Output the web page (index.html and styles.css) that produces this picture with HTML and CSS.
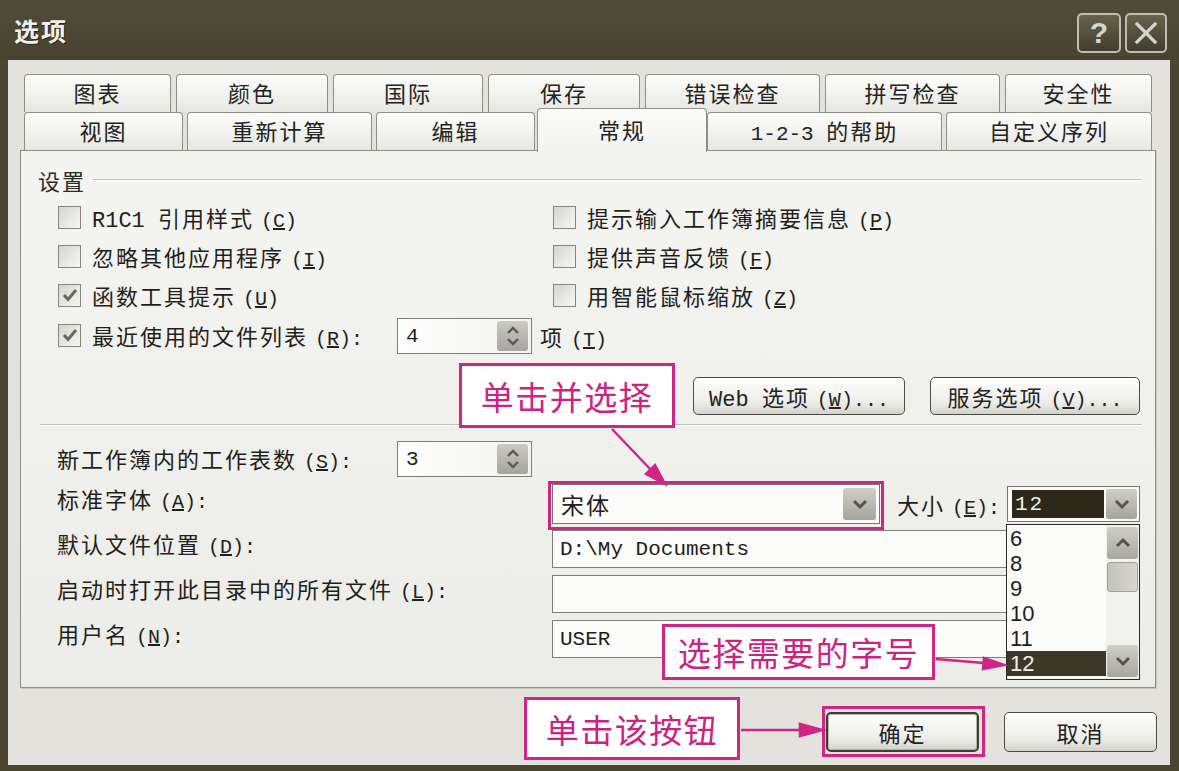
FILE: index.html
```html
<!DOCTYPE html>
<html lang="zh-CN">
<head>
<meta charset="utf-8">
<title>选项</title>
<link rel="stylesheet" href="styles.css">
</head>
<body>
<div class="dialog">
  <header class="titlebar">
    <h1 class="title">选项</h1>
    <div class="caption-buttons">
      <div class="cap-btn help">?</div>
      <div class="cap-btn close">
        <svg width="26" height="26" viewBox="0 0 26 26"><path d="M4 4 L22 22 M22 4 L4 22" stroke="#d6d5cc" stroke-width="3.2" stroke-linecap="square"/></svg>
      </div>
    </div>
  </header>

  <div class="client">
    <div class="tabs">
      <div class="tab-row back">
        <div class="tab w147">图表</div>
        <div class="tab w152">颜色</div>
        <div class="tab w150">国际</div>
        <div class="tab w152">保存</div>
        <div class="tab w175">错误检查</div>
        <div class="tab w175">拼写检查</div>
        <div class="tab w147">安全性</div>
      </div>
      <div class="tab-row front">
        <div class="tab w159">视图</div>
        <div class="tab w185">重新计算</div>
        <div class="tab w159">编辑</div>
        <div class="tab active w170">常规</div>
        <div class="tab w235"><span><span class="mono">1-2-3 </span>的帮助</span></div>
        <div class="tab w206">自定义序列</div>
      </div>
    </div>

    <div class="panel">
      <div class="group-head"><span>设置</span><span class="rule"></span></div>

      <div class="checks">
        <div class="check"><span class="box"></span><span><span class="mono">R1C1 </span>引用样式 <span class="acc">(<u>C</u>)</span></span></div>
        <div class="check"><span class="box"></span><span>提示输入工作簿摘要信息 <span class="acc">(<u>P</u>)</span></span></div>
        <div class="check"><span class="box"></span><span>忽略其他应用程序 <span class="acc">(<u>I</u>)</span></span></div>
        <div class="check"><span class="box"></span><span>提供声音反馈 <span class="acc">(<u>F</u>)</span></span></div>
        <div class="check"><span class="box checked"><svg width="20" height="20" viewBox="0 0 20 20"><path d="M4 10 L8 14.5 L16 5" fill="none" stroke="#6b6a62" stroke-width="3"/></svg></span><span>函数工具提示 <span class="acc">(<u>U</u>)</span></span></div>
        <div class="check"><span class="box"></span><span>用智能鼠标缩放 <span class="acc">(<u>Z</u>)</span></span></div>
      </div>

      <div class="recent">
        <div class="check recent-label"><span class="box checked"><svg width="20" height="20" viewBox="0 0 20 20"><path d="M4 10 L8 14.5 L16 5" fill="none" stroke="#6b6a62" stroke-width="3"/></svg></span><span>最近使用的文件列表 <span class="acc">(<u>R</u>):</span></span></div>
        <div class="spin">
          <span class="spin-val">4</span>
          <span class="spin-btn">
            <svg width="16" height="24" viewBox="0 0 16 24"><path d="M3 9 L8 4 L13 9 M3 15 L8 20 L13 15" fill="none" stroke="#5b5a52" stroke-width="2.4"/></svg>
          </span>
        </div>
        <span class="items-label">项 <span class="acc">(<u>T</u>)</span></span>
      </div>

      <div class="option-buttons">
        <div class="btn wide"><span><span class="mono">Web </span>选项 <span class="acc">(<u>W</u>)...</span></span></div>
        <div class="btn wide2"><span>服务选项 <span class="acc">(<u>V</u>)...</span></span></div>
      </div>

      <div class="divider"></div>

      <div class="form">
        <div class="label first">新工作簿内的工作表数 <span class="acc">(<u>S</u>):</span></div>
        <div class="spin">
          <span class="spin-val">3</span>
          <span class="spin-btn">
            <svg width="16" height="24" viewBox="0 0 16 24"><path d="M3 9 L8 4 L13 9 M3 15 L8 20 L13 15" fill="none" stroke="#5b5a52" stroke-width="2.4"/></svg>
          </span>
        </div>
        <div class="fill"></div>

        <div class="label span2">标准字体 <span class="acc">(<u>A</u>):</span></div>
        <div class="font-row">
          <div class="combo">
            <span class="combo-text">宋体</span>
            <span class="drop-btn"><svg width="18" height="14" viewBox="0 0 18 14"><path d="M3 4 L9 10 L15 4" fill="none" stroke="#55544c" stroke-width="3"/></svg></span>
          </div>
          <span class="size-label">大小 <span class="acc">(<u>E</u>):</span></span>
          <div class="size-combo">
            <span class="size-sel">12</span>
            <span class="drop-btn"><svg width="18" height="14" viewBox="0 0 18 14"><path d="M3 4 L9 10 L15 4" fill="none" stroke="#55544c" stroke-width="3"/></svg></span>
          </div>
        </div>

        <div class="label span2">默认文件位置 <span class="acc">(<u>D</u>):</span></div>
        <div class="field">D:\My Documents</div>

        <div class="label span2">启动时打开此目录中的所有文件 <span class="acc">(<u>L</u>):</span></div>
        <div class="field"></div>

        <div class="label span2">用户名 <span class="acc">(<u>N</u>):</span></div>
        <div class="field">USER</div>
      </div>
    </div>

    <div class="footer">
      <div class="btn action default">确定</div>
      <div class="btn action">取消</div>
    </div>
  </div>

  <div class="dropdown">
    <div class="dd-items">
      <div class="dd-item">6</div>
      <div class="dd-item">8</div>
      <div class="dd-item">9</div>
      <div class="dd-item">10</div>
      <div class="dd-item">11</div>
      <div class="dd-item sel">12</div>
    </div>
    <div class="dd-scroll">
      <span class="sb-btn"><svg width="18" height="14" viewBox="0 0 18 14"><path d="M3 10 L9 4 L15 10" fill="none" stroke="#55544c" stroke-width="3"/></svg></span>
      <span class="sb-thumb"></span>
      <span class="sb-space"></span>
      <span class="sb-btn"><svg width="18" height="14" viewBox="0 0 18 14"><path d="M3 4 L9 10 L15 4" fill="none" stroke="#55544c" stroke-width="3"/></svg></span>
    </div>
  </div>

  <div class="highlight hl-font"></div>
  <div class="highlight hl-ok"></div>
  <div class="callout c-select">单击并选择</div>
  <div class="callout c-size">选择需要的字号</div>
  <div class="callout c-ok">单击该按钮</div>

  <svg class="arrows" width="1179" height="771" viewBox="0 0 1179 771">
    <g stroke="#d02585" stroke-width="2.5" fill="#d02585">
      <line x1="612" y1="429" x2="652" y2="471"/>
      <path d="M665 484 L646 474 L655 465 Z"/>
      <line x1="936" y1="659" x2="984" y2="663"/>
      <path d="M1004 665 L983 669 L984 658 Z"/>
      <line x1="741" y1="730" x2="800" y2="730"/>
      <path d="M822 730 L800 724 L800 736 Z"/>
    </g>
  </svg>
</div>
</body>
</html>
```

FILE: styles.css
```css
* {
  box-sizing: border-box;
  margin: 0;
  padding: 0;
}

html, body {
  background: #4a4634;
}

body {
  width: 1179px;
  height: 771px;
  overflow: hidden;
  font-family: "Noto Sans CJK SC", "Liberation Sans", sans-serif;
  color: #1f1e1a;
}

.dialog {
  position: relative;
  width: 1179px;
  height: 771px;
  display: flex;
  flex-direction: column;
  background: #49452f;
}

/* title bar */
.titlebar {
  height: 60px;
  display: flex;
  align-items: center;
  justify-content: space-between;
  padding: 0 12px 0 14px;
  background: linear-gradient(#504c39, #47432f);
}

.title {
  font-size: 25px;
  font-weight: 700;
  color: #f2f1e9;
  letter-spacing: 2px;
  text-shadow: 1px 1px 0 #2a2719;
}

.caption-buttons {
  display: flex;
  gap: 4px;
  margin-top: 6px;
}

.cap-btn {
  width: 44px;
  height: 40px;
  border: 2px solid #bebdb3;
  border-radius: 5px;
  background: linear-gradient(#66624d, #403d2c);
  color: #d6d5cc;
  display: flex;
  align-items: center;
  justify-content: center;
  font: 700 30px "Liberation Sans", sans-serif;
}

.cap-btn.close {
  width: 42px;
}

/* client area */
.client {
  flex: 1;
  margin: 0 9px 6px 8px;
  background: #e3e2dc;
  display: flex;
  flex-direction: column;
  padding-top: 14px;
}

.mono, .acc {
  font-family: "Liberation Mono", monospace;
  letter-spacing: 0;
}

.acc {
  font-size: 20px;
}

/* tabs */
.tabs {
  margin: 0 18px 0 16px;
}

.tab-row {
  display: flex;
  height: 38px;
}

.tab-row.back {
  gap: 5px;
}

.tab-row.front {
  gap: 4px;
  align-items: flex-end;
}

.tab {
  flex: none;
  height: 38px;
  padding-bottom: 3px;
  border: 1px solid #8e8d86;
  border-bottom: none;
  border-radius: 4px 4px 0 0;
  background: linear-gradient(#fdfdfb, #e7e7e2);
  display: flex;
  align-items: center;
  justify-content: center;
  font-size: 22px;
  letter-spacing: 2px;
  color: #222;
}

.tab .mono {
  font-size: 21px;
}

.tab.active {
  height: 44px;
  padding-bottom: 4px;
  margin: 0 -4px -2px -2px;
  background: linear-gradient(#fbfbf9, #f3f3f0);
  position: relative;
  z-index: 2;
}

.w147 { width: 147px; }
.w150 { width: 150px; }
.w152 { width: 152px; }
.w159 { width: 159px; }
.w170 { width: 170px; }
.w175 { width: 175px; }
.w185 { width: 185px; }
.w206 { width: 206px; }
.w235 { width: 235px; }

/* panel */
.panel {
  height: 538px;
  margin: 0 14px 0 12px;
  border: 1px solid #8d8c85;
  box-shadow: 1px 1px 0 #c9c8c1;
  background: linear-gradient(#f4f4f1, #ecece8);
  padding: 16px 13px 0 17px;
  font-size: 22px;
  letter-spacing: 2px;
}

.group-head {
  display: flex;
  align-items: center;
  gap: 6px;
  height: 26px;
  color: #2a2923;
}

.rule {
  flex: 1;
  height: 2px;
  border-top: 1px solid #c3c2bb;
  border-bottom: 1px solid #ffffff;
}

.checks {
  display: grid;
  grid-template-columns: 495px 1fr;
  grid-auto-rows: 38px;
  row-gap: 1px;
  margin: 6px 0 0 20px;
}

.check {
  display: flex;
  align-items: center;
  gap: 11px;
  padding-bottom: 2px;
}

.box {
  flex: none;
  width: 23px;
  height: 23px;
  border: 1px solid #84837c;
  background: linear-gradient(135deg, #d6d6d0, #f6f6f3);
  display: flex;
  align-items: center;
  justify-content: center;
}

.recent {
  display: flex;
  align-items: center;
  height: 40px;
  margin: 1px 0 0 20px;
}

.recent-label {
  width: 339px;
}

.items-label {
  margin-left: 8px;
}

/* spinner */
.spin {
  width: 135px;
  height: 36px;
  border: 1px solid #7e7d76;
  background: linear-gradient(90deg, #fdfdfc, #f4f4f1);
  display: flex;
  align-items: center;
  justify-content: space-between;
  padding: 2px 3px 2px 8px;
}

.spin-val {
  font: 21px "Liberation Mono", monospace;
}

.spin-btn {
  width: 31px;
  height: 30px;
  border-radius: 3px;
  background: linear-gradient(#cbcbc3, #a6a59d);
  display: flex;
  align-items: center;
  justify-content: center;
}

/* push buttons */
.option-buttons {
  display: flex;
  justify-content: flex-end;
  gap: 25px;
  margin: 21px 2px 0 0;
}

.btn {
  height: 38px;
  border: 1px solid #4d4c44;
  border-radius: 5px;
  background: linear-gradient(#fefefd, #ececE7 70%, #d2d1ca);
  display: flex;
  align-items: center;
  justify-content: center;
  font-size: 22px;
  letter-spacing: 2px;
  color: #222;
}

.btn.wide { width: 212px; }
.btn.wide2 { width: 210px; }

.divider {
  height: 2px;
  margin: 9px 0 0 2px;
  border-top: 1px solid #bdbcb5;
  border-bottom: 1px solid #ffffff;
}

/* lower form */
.form {
  display: grid;
  grid-template-columns: 340px 155px 1fr;
  grid-auto-rows: 38px;
  row-gap: 7px;
  align-items: center;
  margin: 14px 2px 0 19px;
}

.label {
  padding-bottom: 12px;
}

.label.first {
  padding-bottom: 2px;
}

.label.span2 {
  grid-column: 1 / 3;
}

.font-row {
  display: flex;
  align-items: center;
  height: 38px;
}

.combo {
  width: 328px;
  height: 40px;
  border: 1px solid #77766f;
  background: #fbfbf9;
  display: flex;
  align-items: center;
  padding: 3px;
}

.combo-text {
  flex: 1;
  padding-left: 5px;
  font-size: 23px;
}

.drop-btn {
  width: 33px;
  height: 32px;
  border-radius: 3px;
  background: linear-gradient(#cfcfc8, #a5a49c);
  display: flex;
  align-items: center;
  justify-content: center;
}

.size-label {
  margin-left: 17px;
}

.size-combo {
  margin-left: auto;
  width: 133px;
  height: 36px;
  border: 1px solid #77766f;
  background: #fbfbf9;
  display: flex;
  align-items: center;
  padding: 3px 2px 3px 4px;
  gap: 2px;
}

.size-sel {
  flex: 1;
  height: 28px;
  background: #2c281a;
  color: #f1f0e8;
  font: 21px "Liberation Mono", monospace;
  display: flex;
  align-items: center;
  padding-left: 3px;
}

.size-combo .drop-btn {
  width: 31px;
  height: 30px;
}

.field {
  height: 38px;
  border: 1px solid #7d7c75;
  background: #fbfbf9;
  font: 21px "Liberation Mono", monospace;
  letter-spacing: 0;
  display: flex;
  align-items: center;
  padding-left: 7px;
}

/* footer */
.footer {
  flex: 1;
  display: flex;
  justify-content: flex-end;
  align-items: flex-start;
  gap: 25px;
  padding: 24px 13px 0 0;
}

.btn.action {
  width: 153px;
  height: 40px;
}

.btn.default {
  border: 2px solid #3f3e34;
  box-shadow: inset 0 0 0 1px #b7b6ae;
}

/* dropdown list (open) */
.dropdown {
  position: absolute;
  left: 1006px;
  top: 524px;
  width: 134px;
  height: 156px;
  border: 1px solid #2a2922;
  background: #fbfbf9;
  display: flex;
  z-index: 5;
}

.dd-items {
  flex: 1;
  display: flex;
  flex-direction: column;
  padding-top: 1px;
}

.dd-item {
  height: 25px;
  padding-left: 3px;
  font: 22px/25px "Liberation Sans", sans-serif;
  color: #1f1e1a;
}

.dd-item.sel {
  background: #3c3829;
  color: #efeee6;
}

.dd-scroll {
  width: 33px;
  display: flex;
  flex-direction: column;
  padding: 2px 1px;
  background: #f1f1ed;
}

.sb-btn {
  height: 32px;
  border-radius: 3px;
  background: linear-gradient(#cfcfc8, #a8a79f);
  display: flex;
  align-items: center;
  justify-content: center;
}

.sb-thumb {
  height: 30px;
  margin-top: 3px;
  border-radius: 3px;
  background: linear-gradient(90deg, #c4c3bc, #d6d5cf);
  border: 1px solid #a3a29a;
}

.sb-space {
  flex: 1;
}

/* annotations */
.callout {
  position: absolute;
  background: #ffffff;
  border: 3px solid #d02585;
  color: #cc2382;
  font-size: 33px;
  letter-spacing: 1.5px;
  display: flex;
  align-items: center;
  justify-content: center;
  z-index: 6;
}

.c-select { left: 459px; top: 363px; width: 216px; height: 65px; }
.c-size { left: 662px; top: 624px; width: 273px; height: 56px; }
.c-ok { left: 524px; top: 697px; width: 216px; height: 63px; }

.highlight {
  position: absolute;
  border: 3px solid #d02585;
  z-index: 6;
}

.hl-font { left: 548px; top: 481px; width: 336px; height: 49px; }
.hl-ok { left: 822px; top: 706px; width: 163px; height: 51px; }

.arrows {
  position: absolute;
  left: 0;
  top: 0;
  z-index: 7;
  pointer-events: none;
}
```
